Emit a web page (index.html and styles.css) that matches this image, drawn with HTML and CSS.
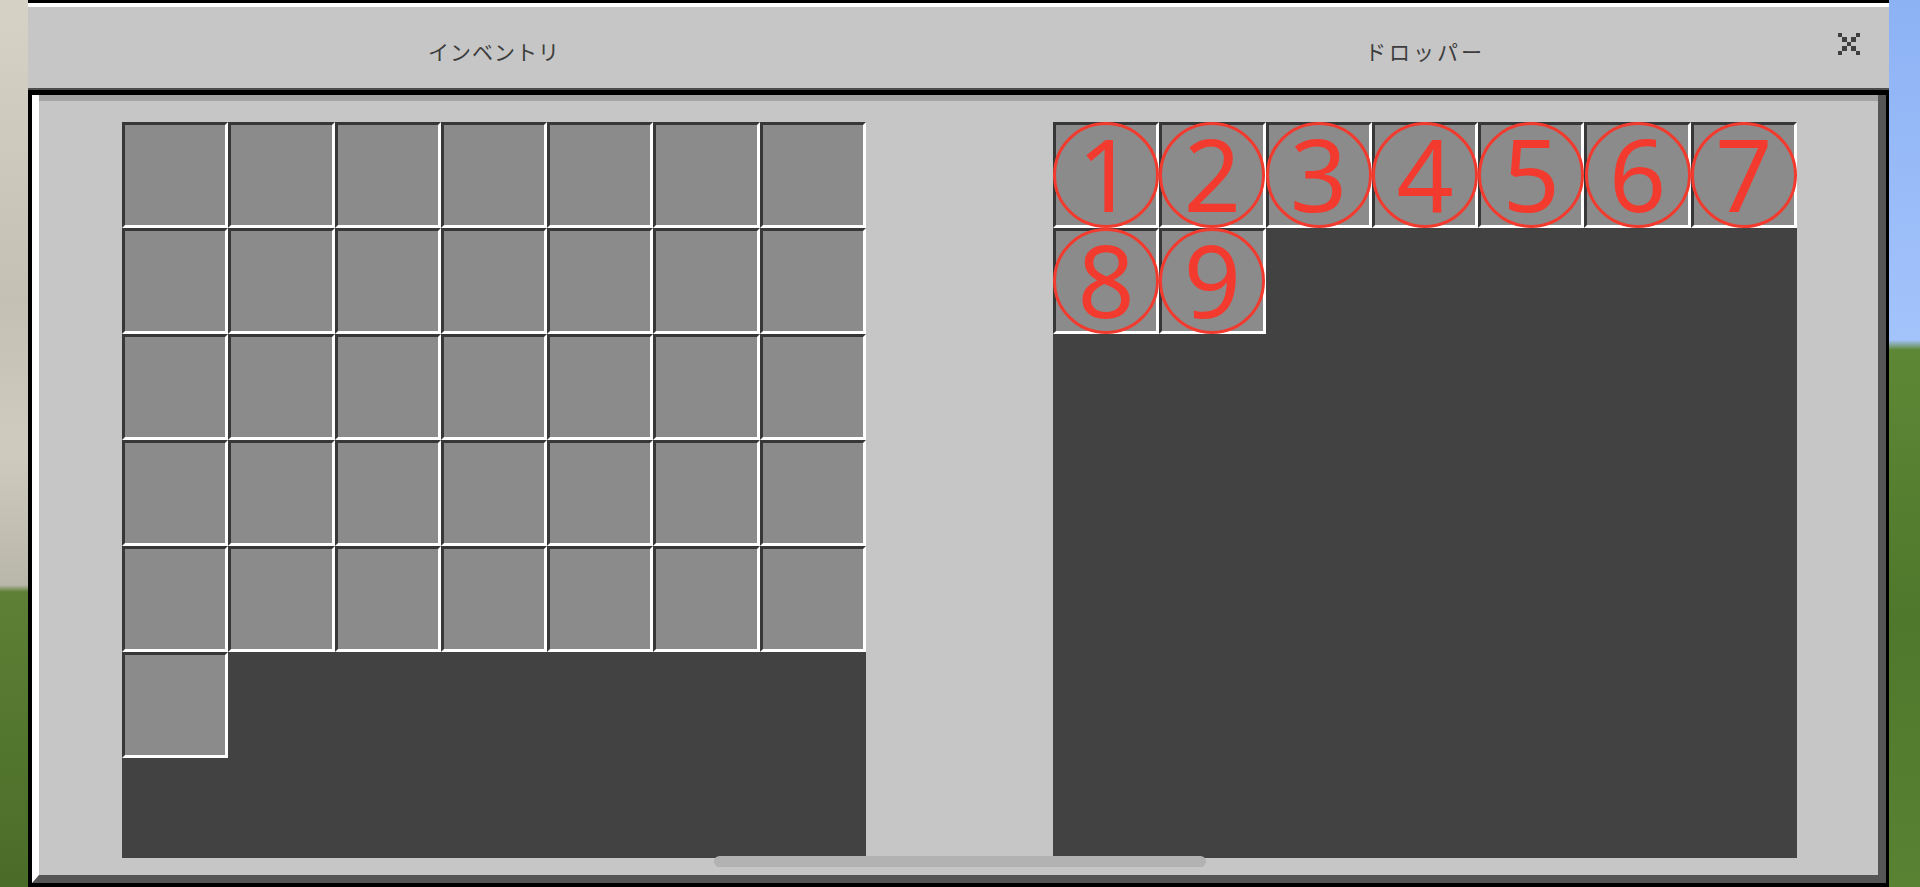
FILE: index.html
```html
<!DOCTYPE html>
<html lang="ja">
<head>
    <meta charset="UTF-8">
    <link rel="stylesheet" href="styles.css">
    <title>ドロッパー</title>
</head>

<body>
    <div class="edge edge-left"></div>

    <div class="window">
        <div class="titlebar">
            <div class="title">インベントリ</div>
            <div class="title title-wide">ドロッパー</div>
            <button class="close" aria-label="閉じる">
                <svg width="22" height="22" viewBox="0 0 5 5" shape-rendering="crispEdges">
                    <rect x="0" y="0" width="1" height="1"/>
                    <rect x="4" y="0" width="1" height="1"/>
                    <rect x="1" y="1" width="1" height="1"/>
                    <rect x="3" y="1" width="1" height="1"/>
                    <rect x="2" y="2" width="1" height="1"/>
                    <rect x="1" y="3" width="1" height="1"/>
                    <rect x="3" y="3" width="1" height="1"/>
                    <rect x="0" y="4" width="1" height="1"/>
                    <rect x="4" y="4" width="1" height="1"/>
                </svg>
            </button>
        </div>

        <div class="frame">
            <div class="content">
                <div class="panel" id="inventory"></div>
                <div class="panel" id="dropper"></div>
                <div class="scrollbar"></div>
            </div>
        </div>
    </div>

    <div class="edge edge-right"></div>

<script>
// インベントリ: 36 スロット
const inventory = document.getElementById('inventory');
for (let i = 0; i < 36; i++) {
    const slot = document.createElement('div');
    slot.className = 'slot';
    inventory.appendChild(slot);
}

// ドロッパー: 9 スロット (番号付き)
const dropper = document.getElementById('dropper');
for (let i = 1; i <= 9; i++) {
    const slot = document.createElement('div');
    slot.className = 'slot';
    slot.innerHTML = `<span class="mark">${i}</span>`;
    dropper.appendChild(slot);
}
</script>
</body>
</html>
```

FILE: styles.css
```css
body {
    margin: 0;
    height: 887px;
    display: flex;
    overflow: hidden;
    font-family: "Noto Sans CJK JP", "Noto Sans", sans-serif;
}

.edge {
    height: 100%;
}

.edge-left {
    width: 28px;
    background: linear-gradient(#d6d3c6 0, #c4c1b4 300px, #cfccbf 450px, #b9b6aa 585px, #5d7f36 592px, #52752e 760px, #4a6c29 887px);
}

.edge-right {
    flex: 1;
    background: linear-gradient(#8db2f4 0, #a3c3fb 340px, #5e8735 350px, #4f782c 620px, #5a8233 887px);
}

.window {
    width: 1861px;
    display: flex;
    flex-direction: column;
    border-top: 3px solid #000;
}

.titlebar {
    position: relative;
    height: 73px;
    display: flex;
    align-items: center;
    gap: 187px;
    padding: 8px 92px 0 94px;
    background-color: #c6c6c6;
    border-top: 4px solid #fff;
    border-bottom: 2px solid #4d4d4d;
}

.title {
    width: 744px;
    text-align: center;
    font-size: 21px;
    line-height: 1;
    letter-spacing: 1px;
    color: #3d3d3d;
}

.title-wide {
    letter-spacing: 3px;
}

.close {
    position: absolute;
    right: 29px;
    top: 26px;
    padding: 0;
    border: none;
    background: none;
    fill: #3f3f3f;
    line-height: 0;
    cursor: pointer;
}

.frame {
    flex: 1;
    background-color: #000;
    border-top: 5px solid #000;
    border-left: 4px solid #000;
    border-right: 3px solid #000;
    border-bottom: 4px solid #000;
}

.content {
    position: relative;
    height: 753px;
    display: flex;
    align-items: flex-start;
    gap: 187px;
    padding: 27px 81px 0 83px;
    background-color: #c6c6c6;
    border-left: 7px solid #fff;
    border-right: 8px solid #555;
    border-bottom: 8px solid #555;
    box-shadow: inset 0 6px 0 #a4a4a4;
}

.panel {
    width: 744px;
    height: 736px;
    display: grid;
    grid-template-columns: repeat(7, minmax(0, 1fr));
    grid-auto-rows: 106px;
    align-content: start;
    background-color: #424242;
}

.slot {
    display: flex;
    align-items: center;
    justify-content: center;
    min-width: 0;
    background-color: #8b8b8b;
    border-top: 3px solid #373737;
    border-left: 3px solid #373737;
    border-right: 3px solid #fff;
    border-bottom: 3px solid #fff;
    box-sizing: border-box;
}

.mark {
    flex: none;
    width: 106px;
    height: 106px;
    display: flex;
    align-items: center;
    justify-content: center;
    padding-bottom: 5px;
    box-sizing: border-box;
    border: 3.5px solid #f23b2e;
    border-radius: 50%;
    color: #f23b2e;
    font-family: "Noto Sans", sans-serif;
    font-weight: 400;
    font-size: 100px;
    line-height: 1;
}

.scrollbar {
    position: absolute;
    left: 675px;
    top: 761px;
    width: 492px;
    height: 11px;
    border-radius: 6px;
    background-color: #b2b2b2;
}
```
